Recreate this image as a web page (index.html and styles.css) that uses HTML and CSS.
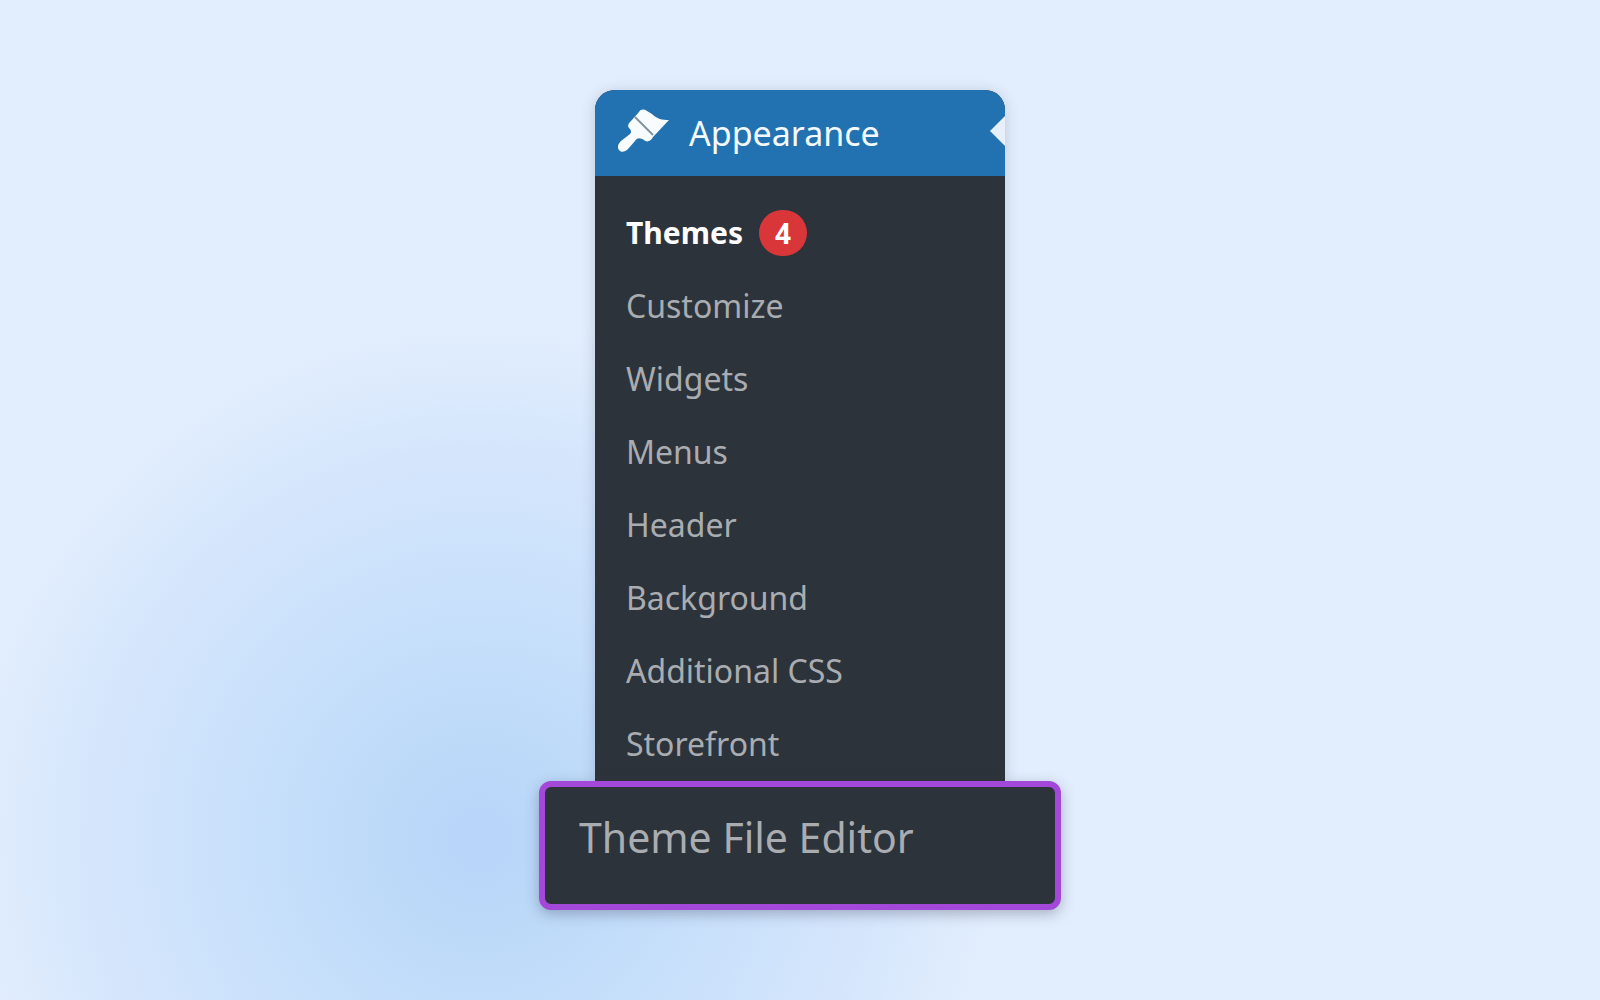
FILE: index.html
```html
<!DOCTYPE html>
<html lang="en">
<head>
<meta charset="utf-8">
<meta name="viewport" content="width=device-width, initial-scale=1">
<title>Appearance menu</title>
<link rel="stylesheet" href="styles.css">
</head>
<body>
<main class="stage">
  <nav class="menu" aria-label="Appearance">
    <div class="panel">
      <a class="menu-head" href="#appearance">
        <svg class="brush" viewBox="0 0 52 44" aria-hidden="true">
          <path class="brush-body" d="M2 41C0 38 1 35 4 32L13 25C15 23 14 21 12 19C10 16 12 14 14 12L22 3C24 0 27 0 30 2L35 5C40 10 45 11 52 11L36 28C34 32 30 34 27 31C24 29 20 28 18 32L11 40C8 43 4 44 2 41Z"/>
          <path class="brush-band" d="M18 8L36 26"/>
        </svg>
        <span class="menu-title">Appearance</span>
        <svg class="pointer" viewBox="0 0 15 30" aria-hidden="true"><path d="M15 0L0 15L15 30Z"/></svg>
      </a>
      <ul class="items">
        <li><a class="item current" href="#themes">Themes <span class="count">4</span></a></li>
        <li><a class="item" href="#customize">Customize</a></li>
        <li><a class="item" href="#widgets">Widgets</a></li>
        <li><a class="item" href="#menus">Menus</a></li>
        <li><a class="item" href="#header">Header</a></li>
        <li><a class="item" href="#background">Background</a></li>
        <li><a class="item" href="#css">Additional CSS</a></li>
        <li><a class="item" href="#storefront">Storefront</a></li>
      </ul>
    </div>
    <a class="editor" href="#editor">Theme File Editor</a>
  </nav>
</main>
</body>
</html>
```
FILE: styles.css
```css
* {
  box-sizing: border-box;
}

body {
  margin: 0;
  font-family: "Noto Sans", "Open Sans", sans-serif;
  background: #e2eefd;
}

a {
  color: inherit;
  text-decoration: none;
}

.stage {
  display: flex;
  justify-content: center;
  min-height: 100vh;
  padding: 90px 64px;
  background: radial-gradient(circle 520px at 30% 84%, #b8d5fa 0%, #bddaf9 20%, #c8e0fb 45%, #d5e6fc 75%, #e2eefd 100%);
}

.menu {
  display: flex;
  flex-direction: column;
  align-self: flex-start;
  width: 410px;
  color: #a9adb1;
}

.panel {
  border-radius: 20px 20px 0 0;
  background: #2d333a;
  box-shadow: 0 2px 14px rgba(60, 60, 90, 0.22);
}

.menu-head {
  display: flex;
  align-items: center;
  height: 86px;
  padding-left: 22px;
  border-radius: 20px 20px 0 0;
  background: #2272b1;
  color: #f4faff;
}

.brush,
.pointer {
  margin-bottom: 4px;
}

.brush {
  width: 52px;
  height: 44px;
}

.brush-body {
  fill: #f8fcff;
}

.brush-band {
  fill: none;
  stroke: #80939f;
  stroke-width: 2;
}

.menu-title {
  margin-left: 20px;
  font-size: 34px;
  line-height: 48px;
}

.pointer {
  width: 15px;
  height: 30px;
  margin-left: auto;
  fill: #e6effa;
}

.items {
  margin: 0;
  padding: 20px 0 1px;
  list-style: none;
}

.item {
  display: flex;
  align-items: center;
  gap: 16px;
  height: 73px;
  padding-left: 31px;
  font-size: 32px;
}

.current {
  color: #fff;
  font-size: 30px;
  font-weight: 700;
}

.count {
  width: 48px;
  border-radius: 24px;
  background: #d93639;
  font-size: 28px;
  line-height: 46px;
  text-align: center;
}

.editor {
  position: relative;
  height: 129px;
  margin: 0 -56px;
  padding: 26px 34px;
  border: 6px solid #a348d8;
  border-radius: 12px;
  background: #2d333a;
  font-size: 41px;
  line-height: 48px;
  box-shadow: 0 4px 14px rgba(60, 60, 90, 0.35);
}
```
